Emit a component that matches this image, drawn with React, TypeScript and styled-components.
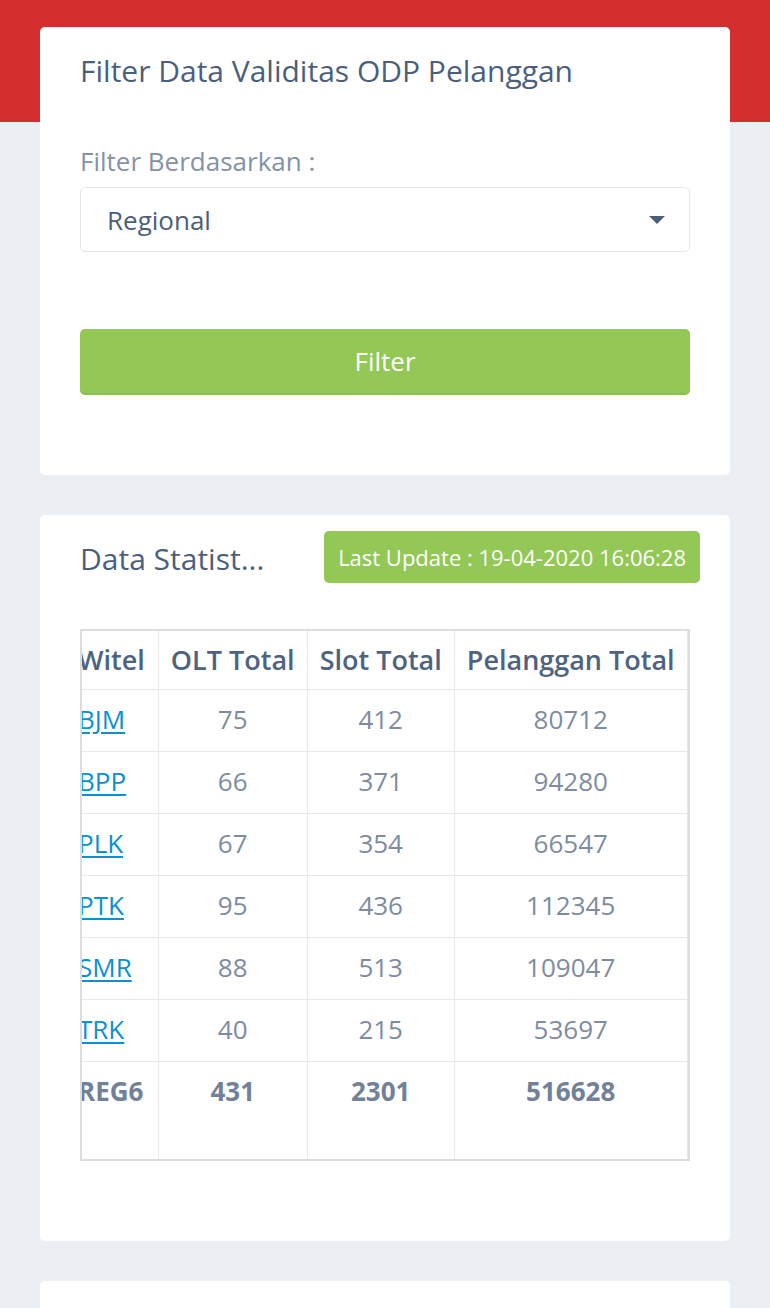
import React, { useLayoutEffect, useRef } from "react";
import styled, { createGlobalStyle } from "styled-components";

const GlobalStyle = createGlobalStyle`
  html { scrollbar-width: none; }
  html::-webkit-scrollbar { display: none; }
  body {
    margin: 0;
    font-family: "Open Sans", "Noto Sans", sans-serif;
    background: #ebeef3;
  }
  * { box-sizing: border-box; }
`;

const Page = styled.div`
  min-height: 1400px;
  padding: 27px 40px 0;
  background: linear-gradient(#d32f2f 0, #d32f2f 122px, #ebeef3 122px);
  display: flex;
  flex-direction: column;
  gap: 40px;
`;

const Card = styled.section<{ $pad: string; $minH?: number }>`
  background: #ffffff;
  border-radius: 5px;
  padding: ${(p) => p.$pad};
  min-height: ${(p) => (p.$minH ? `${p.$minH}px` : "0")};
  display: flex;
  flex-direction: column;
`;

const CardTitle = styled.h4`
  margin: 0;
  font-size: 30px;
  line-height: 36px;
  font-weight: 400;
  color: #4b5f7c;
  white-space: nowrap;
`;

const Label = styled.label`
  margin-top: 54px;
  font-size: 26px;
  line-height: 36px;
  color: #8592a6;
`;

const SelectBox = styled.div`
  margin-top: 8px;
  height: 65px;
  border: 1px solid #e6e6e6;
  border-radius: 5px;
  padding: 0 24px 0 26px;
  display: flex;
  align-items: center;
  justify-content: space-between;
  font-size: 26px;
  color: #4d5e78;
`;

const Caret = styled.svg`
  width: 16px;
  height: 8px;
  fill: #4d5e78;
`;

const FilterButton = styled.button`
  margin-top: 77px;
  height: 66px;
  width: 100%;
  border: none;
  border-bottom: 2px solid #8bc04e;
  border-radius: 5px;
  background: #93c756;
  color: #ffffff;
  font-family: inherit;
  font-size: 26px;
  cursor: pointer;
`;

const HeaderRow = styled.div`
  display: flex;
  align-items: center;
  justify-content: space-between;
  gap: 20px;
`;

const StatTitle = styled.h4`
  margin: 4px 0 0;
  font-size: 30px;
  line-height: 36px;
  font-weight: 400;
  color: #4b5f7c;
  white-space: nowrap;
`;

const Badge = styled.span`
  height: 52px;
  padding: 0 14px;
  display: flex;
  align-items: center;
  background: #93c756;
  color: #ffffff;
  border-radius: 5px;
  font-size: 22px;
  white-space: nowrap;
`;

const TableScroll = styled.div`
  margin-top: 46px;
  margin-right: 10px;
  border: 2px solid #dddddd;
  overflow: hidden;
`;

const Table = styled.table`
  border-collapse: collapse;
  font-size: 26px;
  white-space: nowrap;
`;

const Th = styled.th<{ $left?: boolean }>`
  padding: ${(p) => (p.$left ? "11px 13px 11px 12px" : "11px 12px")};
  line-height: 36px;
  font-size: 27px;
  font-weight: 600;
  color: #4e6380;
  text-align: ${(p) => (p.$left ? "left" : "center")};
  border: 1px solid #e8e8e8;
  border-top: none;
`;

const Td = styled.td<{ $left?: boolean; $bold?: boolean; $foot?: boolean }>`
  padding: ${(p) => (p.$foot ? "12px 12px 50px" : "12px 12px 14px")};
  line-height: 35px;
  vertical-align: ${(p) => (p.$foot ? "top" : "middle")};
  font-weight: ${(p) => (p.$bold ? 700 : 400)};
  color: ${(p) => (p.$bold ? "#718197" : "#7d8ca1")};
  text-align: ${(p) => (p.$left ? "left" : "center")};
  border: 1px solid #e8e8e8;
  ${(p) => (p.$foot ? "border-bottom: none;" : "")}
`;

const WitelLink = styled.a`
  color: #0b90d3;
  text-decoration: underline;
  text-underline-offset: 3px;
`;

const rows = [
  { witel: "BJM", olt: 75, slot: 412, plg: 80712 },
  { witel: "BPP", olt: 66, slot: 371, plg: 94280 },
  { witel: "PLK", olt: 67, slot: 354, plg: 66547 },
  { witel: "PTK", olt: 95, slot: 436, plg: 112345 },
  { witel: "SMR", olt: 88, slot: 513, plg: 109047 },
  { witel: "TRK", olt: 40, slot: 215, plg: 53697 },
];

export default function App() {
  const scrollRef = useRef<HTMLDivElement>(null);
  useLayoutEffect(() => {
    const el = scrollRef.current;
    if (el) el.scrollLeft = el.scrollWidth;
  }, []);

  return (
    <>
      <GlobalStyle />
      <Page>
        <Card $pad="26px 40px 80px">
          <CardTitle>Filter Data Validitas ODP Pelanggan</CardTitle>
          <Label>Filter Berdasarkan :</Label>
          <SelectBox>
            <span>Regional</span>
            <Caret viewBox="0 0 16 8">
              <polygon points="0,0 16,0 8,8" />
            </Caret>
          </SelectBox>
          <FilterButton>Filter</FilterButton>
        </Card>

        <Card $pad="16px 30px 80px 40px">
          <HeaderRow>
            <StatTitle>Data Statist...</StatTitle>
            <Badge>Last Update : 19-04-2020 16:06:28</Badge>
          </HeaderRow>
          <TableScroll ref={scrollRef}>
            <Table>
              <thead>
                <tr>
                  <Th $left>Witel</Th>
                  <Th>OLT Total</Th>
                  <Th>Slot Total</Th>
                  <Th>Pelanggan Total</Th>
                </tr>
              </thead>
              <tbody>
                {rows.map((r) => (
                  <tr key={r.witel}>
                    <Td $left>
                      <WitelLink href="#">{r.witel}</WitelLink>
                    </Td>
                    <Td>{r.olt}</Td>
                    <Td>{r.slot}</Td>
                    <Td>{r.plg}</Td>
                  </tr>
                ))}
              </tbody>
              <tfoot>
                <tr>
                  <Td $left $bold $foot>REG6</Td>
                  <Td $bold $foot>431</Td>
                  <Td $bold $foot>2301</Td>
                  <Td $bold $foot>516628</Td>
                </tr>
              </tfoot>
            </Table>
          </TableScroll>
        </Card>

        <Card $pad="40px" $minH={300} />
      </Page>
    </>
  );
}
